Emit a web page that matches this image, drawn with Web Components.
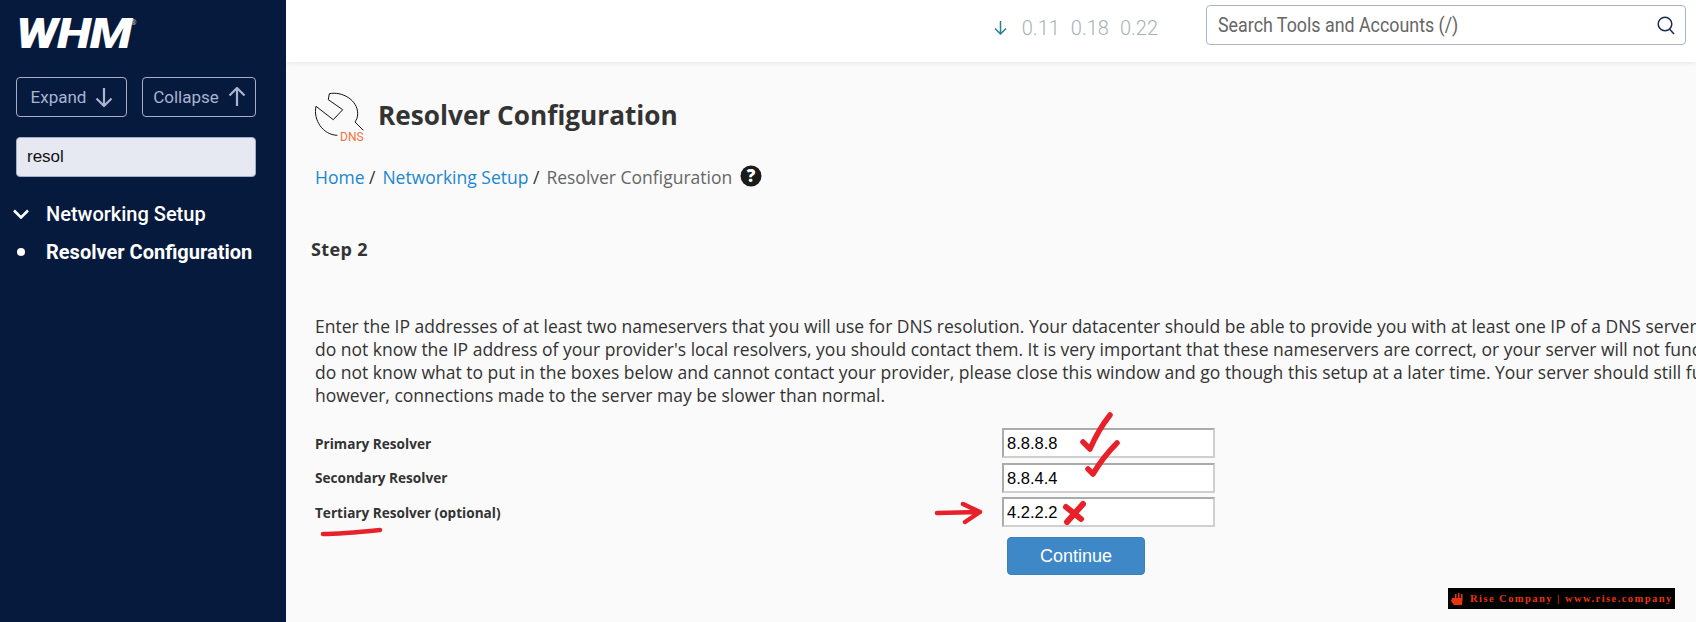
<!DOCTYPE html>
<html lang="en">
<head>
<meta charset="utf-8">
<title>Resolver Configuration</title>
<style>
html, body { margin: 0; height: 100%; overflow: hidden; background: #fafafa; }
</style>
</head>
<body>
<whm-app></whm-app>
<script>
const sidebarTpl = document.createElement("template")
sidebarTpl.innerHTML = `
<style>
:host { display: block; width: 286px; height: 622px; background: #061a3e; font-family: Roboto, sans-serif; flex: none; box-sizing: border-box; padding: 18px 30px 0 16px; }
.logo { height: 31px; display: flex; color: #fff; }
.logo b { font: italic 900 43px/31px Roboto, sans-serif; letter-spacing: -1px; display: block; width: 115px; transform: scaleX(1.16); transform-origin: 0 50%; }
.logo sup { font: 400 7px/10px Roboto, sans-serif; color: #b9c2d6; margin-left: 0; }
.btns { display: flex; gap: 15px; margin-top: 28px; }
.btn { height: 40px; box-sizing: border-box; border: 1px solid #a4aec6; border-radius: 4px; color: #a9b4cf; font-size: 17px; display: flex; align-items: center; justify-content: center; gap: 8px; }
.btn svg { position: relative; left: 1px; }
.expand { width: 111px; }
.collapse { width: 114px; }
.search { margin-top: 20px; height: 40px; width: 240px; box-sizing: border-box; background: #e6e9f1; border: 1px solid #a4aec6; border-radius: 4px; padding-left: 10px; display: flex; align-items: center; font: 17px "Liberation Sans", sans-serif; color: #111; }
.item { display: flex; align-items: center; color: #fff; margin-left: -16px; height: 38px; }
.item .mark { width: 46px; flex: none; display: flex; justify-content: center; padding-right: 5px; box-sizing: border-box; }
.group { font-size: 20px; font-weight: 500; margin-top: 18px; }
.page { font-size: 20px; font-weight: 700; }
.dot { width: 8px; height: 8px; border-radius: 50%; background: #fff; }
</style>
<div class="logo"><b>WHM</b><sup>®</sup></div>
<div class="btns">
  <div class="btn expand">Expand
    <svg width="18" height="20" viewBox="0 0 18 20" fill="none" stroke="currentColor" stroke-width="2.200"><path d="M9 1v18M1.500 11.500 9 19l7.500-7.500"/></svg>
  </div>
  <div class="btn collapse">Collapse
    <svg width="18" height="20" viewBox="0 0 18 20" fill="none" stroke="currentColor" stroke-width="2.200"><path d="M9 19V1M1.500 8.500 9 1l7.500 7.500"/></svg>
  </div>
</div>
<div class="search">resol</div>
<div class="item group"><span class="mark"><svg width="16" height="10" viewBox="0 0 16 10" fill="none" stroke="#fff" stroke-width="2.600"><path d="M1 1.500 8 8.500l7-7"/></svg></span>Networking Setup</div>
<div class="item page"><span class="mark"><span class="dot"></span></span>Resolver Configuration</div>
`
class WhmSidebar extends HTMLElement {
  constructor() {
    super()
    this.attachShadow({ mode: "open" }).append(sidebarTpl.content.cloneNode(true))
  }
}
customElements.define("whm-sidebar", WhmSidebar)

const topbarTpl = document.createElement("template")
topbarTpl.innerHTML = `
<style>
:host { display: flex; height: 62px; background: #fff; box-shadow: 0 1px 5px rgba(0,0,0,.08); align-items: flex-start; justify-content: flex-end; padding: 5px 10px 0 0; box-sizing: border-box; position: relative; font-family: Roboto, sans-serif; }
.load { display: flex; align-items: center; color: #a9b1b6; font-size: 20px; font-weight: 300; margin: 11px 48px 0 0; }
.load svg { margin-right: 15px; }
.load span { margin-right: 11px; }
.load span:last-child { margin-right: 0; }
.search { width: 480px; height: 40px; box-sizing: border-box; border: 1px solid #aab5cc; border-radius: 4px; display: flex; align-items: center; justify-content: space-between; padding: 0 10px 0 11px; color: #666; font-size: 20.500px; }
.search span { display: block; white-space: nowrap; transform: scaleX(.87); transform-origin: 0 50%; }
</style>
<div class="load">
  <svg width="13" height="14" viewBox="0 0 13 14" fill="none" stroke="#2b7f94" stroke-width="1.500"><path d="M6.500 0v13M1 7.500 6.500 13 12 7.500"/></svg>
  <span>0.11</span><span>0.18</span><span>0.22</span>
</div>
<div class="search"><span>Search Tools and Accounts (/)</span>
  <svg width="18" height="19" viewBox="0 0 18 19" fill="none" stroke="#1a2b4f" stroke-width="1.500"><circle cx="8" cy="8" r="6.800"/><path d="M12.500 13 17 18"/></svg>
</div>
`
class WhmTopbar extends HTMLElement {
  constructor() {
    super()
    this.attachShadow({ mode: "open" }).append(topbarTpl.content.cloneNode(true))
  }
}
customElements.define("whm-topbar", WhmTopbar)

const headTpl = document.createElement("template")
headTpl.innerHTML = `
<style>
:host { display: block; font-family: "Open Sans", sans-serif; color: #333; }
.title { display: flex; align-items: flex-start; gap: 13px; height: 50px; }
.title svg { flex: none; }
h1 { margin: 0; font-size: 26.200px; font-weight: 700; line-height: 50px; position: relative; top: -2px; }
.crumbs { display: flex; align-items: center; margin-top: 22px; font-size: 17.500px; line-height: 26px; color: #666; white-space: pre; }
a { color: #1b87d0; text-decoration: none; }
.sep { color: #333; margin-right: 7px; }
.help { margin-left: 8px; position: relative; top: -1px; }
</style>
<div class="title">
  <svg width="50" height="52" viewBox="0 0 50 52" fill="none">
    <path d="M1 14.300 18.300 27.700 27.700 17.700 13.300 7.700 14.300 1.700C27 -1 42.700 8 42.700 21.700 42.700 25 41.500 28 40 30L48.300 38.300M1 14.300C-2 28 8 43 22.300 43.300" stroke="#111" stroke-width="1"/>
    <text x="25" y="49" font-family="Roboto, sans-serif" font-size="12" fill="#f5703a">DNS</text>
  </svg>
  <h1>Resolver Configuration</h1>
</div>
<div class="crumbs"><a>Home</a><span class="sep"> /</span><a>Networking Setup</a><span class="sep"> /</span><span>Resolver Configuration</span>
  <svg class="help" width="22" height="22" viewBox="0 0 22 22"><circle cx="11" cy="11" r="10.500" fill="#1b1b1b"/><text x="11" y="17" text-anchor="middle" font-family="Open Sans, sans-serif" font-weight="800" font-size="17" fill="#fff">?</text></svg>
</div>
`
class WhmPageHead extends HTMLElement {
  constructor() {
    super()
    this.attachShadow({ mode: "open" }).append(headTpl.content.cloneNode(true))
  }
}
customElements.define("whm-page-head", WhmPageHead)

const formTpl = document.createElement("template")
formTpl.innerHTML = `
<style>
:host { display: block; font-family: "Open Sans", sans-serif; color: #333; }
h2 { margin: 46px 0 0 -4px; font-size: 18px; font-weight: 700; line-height: 26px; letter-spacing: .35px; }
p { margin: 53px 0 0 0; font-size: 17.500px; line-height: 22.860px; white-space: nowrap; }
.rows { display: grid; grid-template-columns: 687px 213px; margin-top: 22px; row-gap: 4.500px; align-items: center; }
label { font-size: 13.600px; font-weight: 700; }
.field { height: 30px; box-sizing: border-box; background: #fff; border: 2px solid; border-color: #ababab #cfcfcf #cfcfcf #ababab; font: 16.500px/26px "Liberation Sans", sans-serif; color: #000; padding-left: 3px; }
.go { margin: 10px 0 0 692px; width: 138px; height: 38px; box-sizing: border-box; background: #3f88c8; border: 1px solid #3a80bd; border-radius: 4px; color: #fff; font: 18px "Liberation Sans", sans-serif; display: flex; align-items: center; justify-content: center; }
</style>
<h2>Step 2</h2>
<p>Enter the IP addresses of at least two nameservers that you will use for DNS resolution. Your datacenter should be able to provide you with at least one IP of a DNS server<br>do not know the IP address of your provider's local resolvers, you should contact them. It is very important that these nameservers are correct, or your server will not func<br>do not know what to put in the boxes below and cannot contact your provider, please close this window and go though this setup at a later time. Your server should still fu<br>however, connections made to the server may be slower than normal.</p>
<div class="rows">
  <label>Primary Resolver</label><div class="field">8.8.8.8</div>
  <label>Secondary Resolver</label><div class="field">8.8.4.4</div>
  <label>Tertiary Resolver (optional)</label><div class="field">4.2.2.2</div>
</div>
<div class="go">Continue</div>
`
class WhmResolverForm extends HTMLElement {
  constructor() {
    super()
    this.attachShadow({ mode: "open" }).append(formTpl.content.cloneNode(true))
  }
}
customElements.define("whm-resolver-form", WhmResolverForm)

// red pen marks and the stamp sit on top of the page, so these two are absolute
const marksTpl = document.createElement("template")
marksTpl.innerHTML = `
<style>
:host { position: absolute; left: 0; top: 0; width: 1696px; height: 622px; pointer-events: none; }
svg { display: block; }
</style>
<svg width="1696" height="622" viewBox="0 0 1696 622" fill="none" stroke="#e8202a" stroke-linecap="round" stroke-linejoin="round">
  <path stroke-width="5.500" d="M1083 442 1090 449C1096 435 1102 425 1110 415"/>
  <path stroke-width="5.500" d="M1088 469 1093 474C1100 462 1108 452 1117 443"/>
  <path stroke-width="4.500" d="M937 513 980 512M963 504 980 512 965 522"/>
  <path stroke-width="6" d="M1067 522 1083 504M1066 507 1081 519"/>
  <path stroke-width="4.500" d="M323 534C340 534 360 532 380 530"/>
</svg>
`
class WhmMarks extends HTMLElement {
  constructor() {
    super()
    this.attachShadow({ mode: "open" }).append(marksTpl.content.cloneNode(true))
  }
}
customElements.define("whm-marks", WhmMarks)

const stampTpl = document.createElement("template")
stampTpl.innerHTML = `
<style>
:host { position: absolute; left: 1448px; top: 588px; width: 227px; height: 21px; background: #000; color: #e8350f; font: 700 10.500px/21px "Liberation Serif", serif; letter-spacing: 1.450px; white-space: nowrap; display: flex; align-items: center; gap: 5px; padding-left: 2px; box-sizing: border-box; overflow: hidden; }
</style>
<svg width="15" height="15" viewBox="0 0 15 15"><path fill="#e8350f" d="M2 7h3V3h1.500v4H8V2h1.500v5H11V3h1.500v6L12 14H4L1 10z"/></svg>
<span>Rise Company | www.rise.company</span>
`
class WhmStamp extends HTMLElement {
  constructor() {
    super()
    this.attachShadow({ mode: "open" }).append(stampTpl.content.cloneNode(true))
  }
}
customElements.define("whm-stamp", WhmStamp)

const appTpl = document.createElement("template")
appTpl.innerHTML = `
<style>
:host { display: flex; width: 1696px; height: 622px; overflow: hidden; position: relative; background: #fafafa; }
.main { flex: 1; min-width: 0; overflow: hidden; }
.content { padding: 30px 0 0 29px; }
</style>
<whm-sidebar></whm-sidebar>
<div class="main">
  <whm-topbar></whm-topbar>
  <div class="content">
    <whm-page-head></whm-page-head>
    <whm-resolver-form></whm-resolver-form>
  </div>
</div>
<whm-marks></whm-marks>
<whm-stamp></whm-stamp>
`
class WhmApp extends HTMLElement {
  constructor() {
    super()
    this.attachShadow({ mode: "open" }).append(appTpl.content.cloneNode(true))
  }
}
customElements.define("whm-app", WhmApp)
</script>
</body>
</html>
